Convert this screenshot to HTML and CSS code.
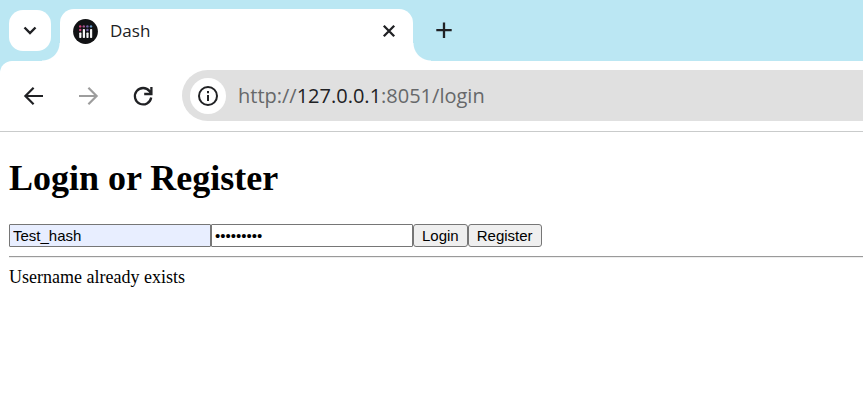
FILE: index.html
```html
<!DOCTYPE html>
<html lang="en">
<head>
<meta charset="utf-8">
<title>Dash</title>
<link rel="stylesheet" href="styles.css">
</head>
<body>
<header class="browser">
  <div class="tab-strip">
    <button class="tab-search" type="button" aria-label="Search tabs">
      <svg width="42" height="41" viewBox="0 0 42 41"><path d="M15.500 17.500l5.500 5.500 5.500-5.500" fill="none" stroke="#202124" stroke-width="2.400"/></svg>
    </button>
    <div class="tab">
      <svg class="favicon" width="25" height="25" viewBox="0 0 25 25">
        <circle cx="12.5" cy="12.5" r="12.4" fill="#111214"/>
        <g fill="#f4f4f4">
          <rect x="6.2" y="13.600" width="2.200" height="5.400" rx=".7"/>
          <rect x="9.8" y="10" width="2.200" height="9" rx=".7"/>
          <rect x="13.4" y="13.600" width="2.200" height="5.400" rx=".7"/>
          <rect x="17" y="10" width="2.200" height="9" rx=".7"/>
        </g>
        <g fill="#d8437c"><circle cx="7.2" cy="7.4" r="1.2"/><circle cx="7.2" cy="11" r="1.2"/></g>
        <circle cx="10.8" cy="7.4" r="1.2" fill="#a5568f"/>
        <g fill="#7262a8"><circle cx="14.4" cy="7.4" r="1.2"/><circle cx="14.4" cy="11" r="1.2"/></g>
        <circle cx="18" cy="7.4" r="1.2" fill="#6699c8"/>
      </svg>
      <span class="tab-title">Dash</span>
      <button class="icon-button tab-close" type="button" aria-label="Close tab">
        <svg width="24" height="24" viewBox="0 0 24 24"><path d="M6.8 6.8l10.4 10.4M17.2 6.8L6.8 17.2" stroke="#202124" stroke-width="2.3"/></svg>
      </button>
    </div>
    <button class="icon-button new-tab" type="button" aria-label="New tab">
      <svg width="24" height="24" viewBox="0 0 24 24"><path d="M12 4.5v15.500M4.300 12.200h15.400" stroke="#202124" stroke-width="2.300"/></svg>
    </button>
  </div>
  <div class="toolbar">
    <nav class="nav-buttons">
      <button class="icon-button" type="button" aria-label="Back">
        <svg width="24" height="24" viewBox="0 0 24 24"><path d="M22 12H4.500M12.600 3.800L4.400 12l8.200 8.200" fill="none" stroke="#202124" stroke-width="2.200"/></svg>
      </button>
      <button class="icon-button" type="button" aria-label="Forward" disabled>
        <svg width="24" height="24" viewBox="0 0 24 24"><path d="M3 12h17.500M12.400 3.800l8.200 8.200-8.200 8.200" fill="none" stroke="#9d9d9d" stroke-width="2.200"/></svg>
      </button>
      <button class="icon-button" type="button" aria-label="Reload">
        <svg width="24" height="24" viewBox="0 0 24 24"><path d="M20.200 13.500A8.200 8.200 0 1 1 18.600 7.200L20.500 9.500M20.400 3v7h-7.200" fill="none" stroke="#202124" stroke-width="2.300"/></svg>
      </button>
    </nav>
    <div class="address-bar">
      <button class="site-info" type="button" aria-label="View site information">
        <svg width="24" height="24" viewBox="0 0 24 24"><circle cx="12" cy="12" r="9" fill="none" stroke="#202124" stroke-width="2"/><path d="M12 11v6M12 7v2.200" stroke="#202124" stroke-width="2"/></svg>
      </button>
      <a class="url" href="#login">http://<span class="host">127.0.0.1</span>:8051/login</a>
    </div>
  </div>
</header>
<main class="page" id="login">
  <h1>Login or Register</h1>
  <form class="login-form">
    <input class="field autofilled" type="text" value="Test_hash" aria-label="Username">
    <input class="field" type="password" value="Test_pass" aria-label="Password">
    <button class="action" type="button">Login</button>
    <button class="action" type="button">Register</button>
  </form>
  <hr>
  <p class="message">Username already exists</p>
</main>
</body>
</html>
```
FILE: styles.css
```css
* {
  box-sizing: border-box;
}

body {
  margin: 0;
  background: #fff;
  color: #000;
  font-family: "Liberation Serif", "Times New Roman", serif;
}

button {
  margin: 0;
  padding: 0;
  border: 0;
}

svg {
  display: block;
}

.browser {
  background: #bbe7f3;
  font-family: "Open Sans", "Noto Sans", sans-serif;
}

.tab-strip {
  display: flex;
  align-items: flex-start;
  padding: 9px 9px 0;
}

.tab-search {
  margin: 1px 9px 0 0;
  border-radius: 14px;
  background: #fff;
}

.tab {
  position: relative;
  display: flex;
  align-items: center;
  flex: 0 1 353px;
  height: 52px;
  padding: 0 12px 8px 13px;
  border-radius: 14px 14px 0 0;
  background: #fff;
}

.tab::before,
.tab::after {
  content: "";
  position: absolute;
  bottom: 0;
  width: 18px;
  height: 18px;
}

.tab::before {
  right: 100%;
  background: radial-gradient(circle at 0 0, transparent 17px, #fff 18px);
}

.tab::after {
  left: 100%;
  background: radial-gradient(circle at 100% 0, transparent 17px, #fff 18px);
}

.tab-title {
  margin-left: 12px;
  color: #202124;
  font-family: "Open Sans", "Noto Sans", sans-serif;
  font-size: 17px;
  line-height: 24px;
}

.icon-button {
  background: none;
}

.tab-close {
  margin-left: auto;
}

.new-tab {
  margin: 9px 0 0 19px;
}

.toolbar {
  display: flex;
  align-items: center;
  padding: 9px 0 10px 21px;
  border-bottom: 1px solid #c9cbcb;
  border-radius: 12px 0 0 0;
  background: #fff;
}

.nav-buttons {
  display: flex;
  gap: 31px;
  margin-right: 27px;
}

.address-bar {
  display: flex;
  align-items: center;
  flex: 1;
  height: 51px;
  padding-left: 8px;
  border-radius: 26px 0 0 26px;
  background: #e0e0e0;
}

.site-info {
  padding: 6px;
  border-radius: 50%;
  background: #fff;
}

.url {
  margin-left: 12px;
  color: #66686a;
  font-size: 20px;
  line-height: 28px;
  text-decoration: none;
}

.host {
  color: #202124;
}

.page {
  padding: 24px 0 0 9px;
}

h1 {
  margin: 0 0 24px;
  font-size: 36px;
  line-height: 44px;
}

.login-form {
  display: flex;
}

.field,
.action {
  height: 23px;
  border: 1px solid #767676;
  color: #000;
  font-family: "Liberation Sans", Arial, sans-serif;
  font-size: 15px;
  line-height: 17px;
}

.field {
  flex: 0 1 202px;
  min-width: 0;
  margin: 0;
  padding: 1px 3px;
  border-radius: 1px;
  background: #fff;
}

.autofilled {
  background: #e8eeff;
}

.action {
  padding: 1px 8px;
  border-radius: 3px;
  background: #efefef;
}

hr {
  height: 2px;
  margin: 9px 0 8px;
  border: 0;
  border-top: 1px solid #9a9a9a;
  border-bottom: 1px solid #eee;
}

.message {
  margin: 0;
  font-size: 18px;
  line-height: 22px;
}
```
